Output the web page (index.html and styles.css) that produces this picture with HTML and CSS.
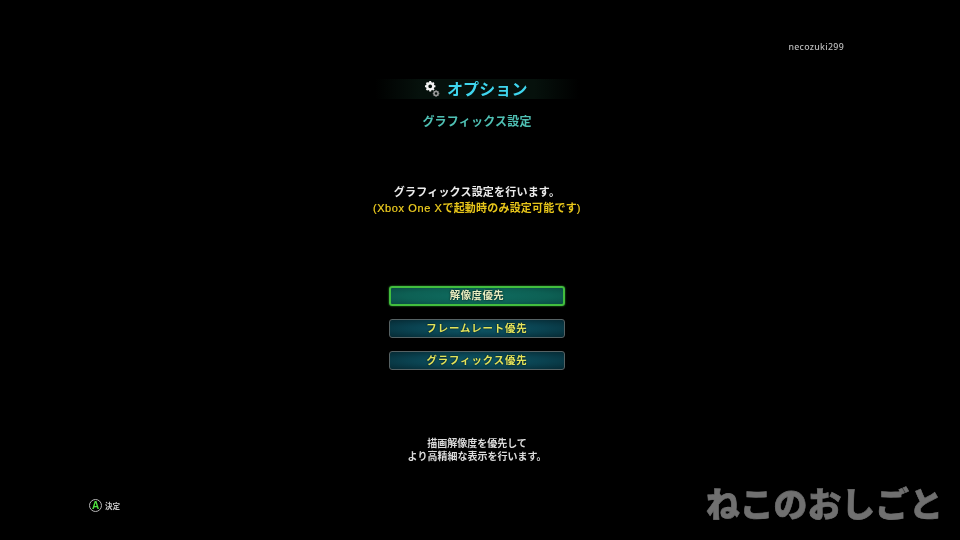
FILE: index.html
```html
<!DOCTYPE html>
<html lang="ja">
<head>
<meta charset="utf-8">
<title>オプション</title>
<link rel="stylesheet" href="styles.css">
</head>
<body>
<div class="screen">
  <div class="user">necozuki299</div>
  <header class="title-band">
    <svg class="gears" viewBox="0 0 20 20" aria-hidden="true">
      <g fill="none" stroke="#f2f2f2">
        <circle cx="8" cy="7" r="3.4" stroke-width="2.6"/>
        <path d="M8 1.2v2M8 10.8v2M2.2 7h2M11.8 7h2M3.9 2.9l1.4 1.4M10.7 9.7l1.4 1.4M3.9 11.1l1.4-1.4M10.7 4.3l1.4-1.4" stroke-width="2.2"/>
      </g>
      <g fill="none" stroke="#9a9a9a">
        <circle cx="14.5" cy="15" r="2.2" stroke-width="1.6"/>
        <path d="M14.5 11.4v1.2M14.5 17.4v1.2M10.9 15h1.2M16.9 15h1.2M12 12.5l.8.8M16.2 16.7l.8.8M12 17.5l.8-.8M16.2 13.3l.8-.8" stroke-width="1.4"/>
      </g>
    </svg>
    <h1 class="title">オプション</h1>
  </header>
  <h2 class="subtitle">グラフィックス設定</h2>
  <section class="desc">
    <p class="desc-main">グラフィックス設定を行います。</p>
    <p class="desc-note"><span class="latin">(Xbox One X</span>で起動時のみ設定可能です<span class="latin">)</span></p>
  </section>
  <nav class="menu">
    <button class="item item-active">解像度優先</button>
    <button class="item">フレームレート優先</button>
    <button class="item">グラフィックス優先</button>
  </nav>
  <p class="help">描画解像度を優先して<br>より高精細な表示を行います。</p>
  <footer class="footer">
    <div class="hint">
      <span class="a-btn">A</span>
      <span class="hint-label">決定</span>
    </div>
    <div class="mark">ねこのおしごと</div>
  </footer>
</div>
</body>
</html>
```

FILE: styles.css
```css
* { box-sizing: border-box; margin: 0; padding: 0; }
html, body { width: 960px; height: 540px; background: #000; overflow: hidden; }
.screen {
  width: 960px;
  height: 540px;
  display: flex;
  flex-direction: column;
  align-items: center;
  padding: 41px 6px 0 0;
  background: #000;
  font-family: "Noto Sans CJK JP", "Noto Sans", sans-serif;
  color: #eee;
  filter: blur(0.35px);
}
.user {
  align-self: flex-end;
  margin-right: 110px;
  height: 12px;
  font: 500 8.8px/12px "Noto Sans", sans-serif;
  letter-spacing: 0.3px;
  color: #bdbdbd;
}
.title-band {
  margin-top: 26px;
  width: 204px;
  height: 20px;
  display: flex;
  align-items: center;
  padding: 0 0 2px 48px;
  background: linear-gradient(90deg, #000 0%, #06110c 22%, #06110c 78%, #000 100%);
}
.gears { width: 18px; height: 18px; margin-top: 1px; }
.title {
  margin-left: 6px;
  font-size: 16px;
  line-height: 18px;
  font-weight: 700;
  letter-spacing: 0.1px;
  color: #3fd6ee;
}
.subtitle {
  margin-top: 13px;
  font-size: 12px;
  line-height: 18px;
  font-weight: 700;
  letter-spacing: 0.2px;
  color: #4fc0b4;
}
.desc {
  margin-top: 53px;
  text-align: center;
  font-size: 11px;
  line-height: 16px;
  font-weight: 700;
}
.desc-main { color: #ececec; letter-spacing: 0.2px; }
.desc-note {
  color: #e8c61a;
  font-size: 11px;
  letter-spacing: 0.2px;
}
.latin {
  font-family: "Liberation Sans", sans-serif;
  font-weight: 400;
  letter-spacing: 0.6px;
  color: #f2d020;
  -webkit-text-stroke: 0.2px #f2d020;
}
.menu {
  margin-top: 70px;
  display: flex;
  flex-direction: column;
  align-items: center;
  gap: 13px;
}
.item {
  display: block;
  width: 176px;
  height: 19px;
  padding-bottom: 2px;
  border: 1.5px solid #566264;
  border-radius: 3px;
  background: radial-gradient(ellipse at center, #0e5a6a 0%, #0a4250 55%, #062a34 100%);
  font-family: "Noto Sans CJK JP", sans-serif;
  font-size: 10.4px;
  line-height: 14px;
  font-weight: 700;
  letter-spacing: 0.9px;
  color: #e2e45c;
  text-shadow: 0 0 2px #000;
}
.item-active {
  height: 20px;
  border: 2px solid #42bd3e;
  background: radial-gradient(ellipse at center, #0f6c60 0%, #0d6054 60%, #0a4c44 100%);
  color: #e6edc0;
  box-shadow: 0 0 2px #2f9c30;
  letter-spacing: 0.5px;
}
.help {
  margin-top: 66px;
  text-align: center;
  font-size: 10px;
  line-height: 13px;
  font-weight: 700;
  color: #dcdcdc;
}
.footer {
  margin-top: 21px;
  width: 960px;
  align-self: flex-start;
  display: flex;
  justify-content: space-between;
  align-items: flex-end;
  padding: 0 17px 0 89px;
}
.hint {
  display: flex;
  align-items: center;
  gap: 3px;
  margin-bottom: 11px;
}
.a-btn {
  width: 13px;
  height: 13px;
  border: 1.2px solid #b5b5b5;
  border-radius: 50%;
  font: 700 10px/11px "Liberation Sans", sans-serif;
  text-align: center;
  color: #4fe040;
}
.hint-label {
  font-size: 7.5px;
  line-height: 13px;
  font-weight: 700;
  color: #c9c9c9;
}
.mark {
  font-family: "Noto Sans CJK JP", sans-serif;
  font-size: 33.9px;
  line-height: 40px;
  font-weight: 900;
  color: #707070;
  -webkit-text-stroke: 0.6px #707070;
}
```
